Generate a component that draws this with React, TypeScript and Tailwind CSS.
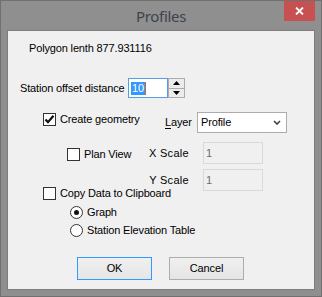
import type { ReactNode } from "react";

const ui = { fontFamily: '"Liberation Sans", Arial, sans-serif' };

function CheckBox({ checked, children }: { checked?: boolean; children: ReactNode }) {
  return (
    <label className="flex h-[13px] items-center gap-[4px] whitespace-nowrap">
      <span className="flex h-[13px] w-[13px] shrink-0 items-center justify-center border border-[#333333] bg-white">
        {checked && (
          <svg width="11" height="11" viewBox="0 0 11 11">
            <path d="M1.5 5.5 L4 8.2 L9.5 1.8" fill="none" stroke="#111" strokeWidth="2.2" />
          </svg>
        )}
      </span>
      <span>{children}</span>
    </label>
  );
}

function Radio({ checked, children }: { checked?: boolean; children: ReactNode }) {
  return (
    <label className="flex h-[13px] items-center gap-[4px] whitespace-nowrap">
      <span className="flex h-[13px] w-[13px] shrink-0 items-center justify-center rounded-full border border-[#333333] bg-white">
        {checked && <span className="h-[5px] w-[5px] rounded-full bg-[#111]" />}
      </span>
      <span>{children}</span>
    </label>
  );
}

function ScaleRow({ label }: { label: string }) {
  return (
    <div className="flex h-[22px] items-center">
      <span className="w-[181px] text-right tracking-[0.3px]">{label}</span>
      <div className="ml-[14px] flex h-[22px] w-[60px] items-center border border-[#d9d9d9] bg-[#f0f0f0] pl-[2px] text-[#6d6d6d]">
        1
      </div>
    </div>
  );
}

export default function App() {
  return (
    <div className="h-[297px] w-[322px] overflow-hidden bg-white">
      <div className="relative flex h-[297px] w-[322px] flex-col border border-[#707070] bg-[#8f8f8f] px-[6px] pb-[6px] pt-[29px]">
        <div
          className="absolute left-0 right-0 top-[4px] text-center text-[15px] tracking-[-0.3px] text-[#3d444c]"
          style={{ fontFamily: '"Noto Sans", "Open Sans", sans-serif' }}
        >
          Profiles
        </div>
        <button className="absolute right-[6px] top-0 flex h-[20px] w-[31px] items-center justify-center bg-[#c75050]">
          <svg width="9" height="8" viewBox="0 0 9 8">
            <path d="M1 0.5 L8 7.5 M8 0.5 L1 7.5" stroke="#fff" strokeWidth="1.8" />
          </svg>
        </button>

        <div
          className="flex flex-1 flex-col border border-[#7d7d7d] bg-[#f0f0f0] text-[11px] tracking-[-0.15px] text-black"
          style={ui}
        >
          <div className="flex h-[34px] items-center pl-[21px]">Polygon lenth 877.931116</div>

          <div className="mt-[13px] flex h-[20px] items-center pl-[12px]">
            <span className="w-[108px] whitespace-nowrap">Station offset distance</span>
            <div className="relative flex h-[20px] w-[40px] items-center border border-[#569de5] bg-white pl-[2px]">
              <span className="bg-[#3399ff] px-[1px] leading-[13px] text-white">10</span>
              <span className="h-[13px] w-[1px] bg-[#cc6a1f]" />
            </div>
            <div className="flex h-[20px] w-[17px] flex-col border border-[#acacac] bg-[#ececec]">
              <div className="flex flex-1 items-center justify-center border-b border-[#acacac]">
                <svg width="7" height="4" viewBox="0 0 7 4">
                  <path d="M0 4 L3.5 0 L7 4 Z" fill="#000" />
                </svg>
              </div>
              <div className="flex flex-1 items-center justify-center">
                <svg width="7" height="4" viewBox="0 0 7 4">
                  <path d="M0 0 L3.5 4 L7 0 Z" fill="#000" />
                </svg>
              </div>
            </div>
          </div>

          <div className="mt-[14px] flex h-[21px] items-start pl-[35px]">
            <div className="mt-[1px] w-[122px]">
              <CheckBox checked>Create geometry</CheckBox>
            </div>
            <div className="flex h-[21px] items-center">
              <span className="w-[32px]">
                <span className="underline underline-offset-[2px]">L</span>ayer
              </span>
              <div className="flex h-[21px] w-[90px] items-center justify-between border border-[#acacac] bg-white pl-[3px] pr-[5px]">
                <span>Profile</span>
                <svg width="8" height="5" viewBox="0 0 8 5">
                  <path d="M1 1 L4 4 L7 1" fill="none" stroke="#404040" strokeWidth="1.6" />
                </svg>
              </div>
            </div>
          </div>

          <div className="relative mt-[9px] flex flex-col">
            <div className="absolute left-[59px] top-[6px]">
              <CheckBox>Plan View</CheckBox>
            </div>
            <ScaleRow label="X Scale" />
            <div className="mt-[5px]">
              <ScaleRow label="Y Scale" />
            </div>
          </div>

          <div className="mt-[-4px] pl-[35px]">
            <CheckBox>Copy Data to Clipboard</CheckBox>
          </div>

          <div className="mt-[6px] pl-[62px]">
            <Radio checked>Graph</Radio>
          </div>
          <div className="mt-[5px] pl-[62px]">
            <Radio>Station Elevation Table</Radio>
          </div>

          <div className="mt-[20px] flex gap-[17px] pl-[69px]">
            <button className="h-[23px] w-[75px] border border-[#3399ff] bg-gradient-to-b from-[#f0f0f0] to-[#e5e5e5]">
              OK
            </button>
            <button className="h-[23px] w-[75px] border border-[#adadad] bg-gradient-to-b from-[#f0f0f0] to-[#e5e5e5]">
              Cancel
            </button>
          </div>
        </div>
      </div>
    </div>
  );
}
